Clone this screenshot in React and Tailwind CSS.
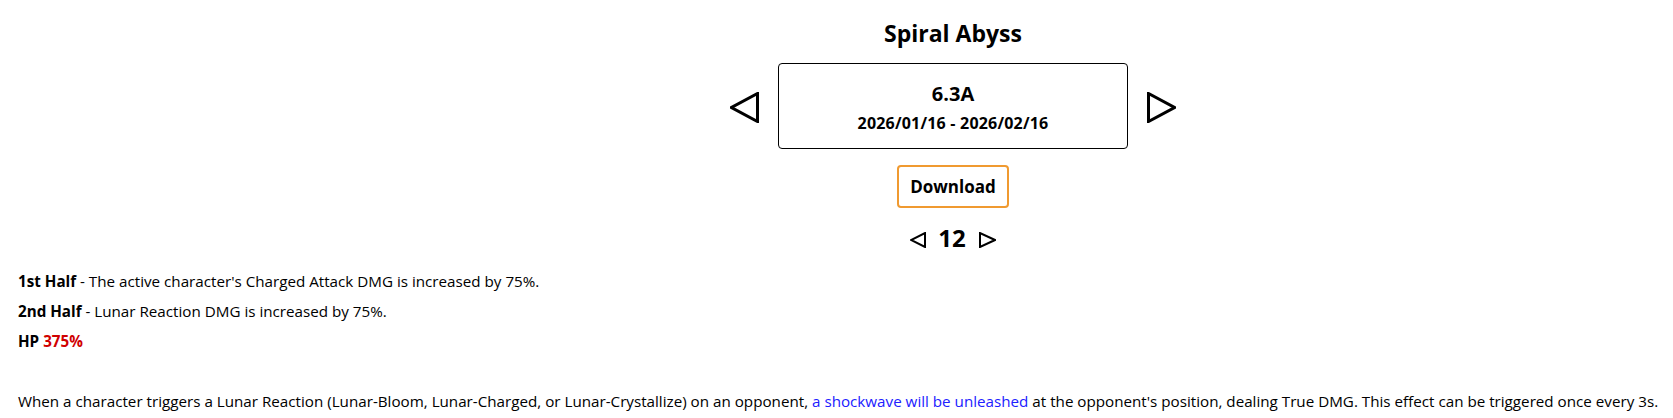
import React, { useState } from "react";

const font = { fontFamily: '"Open Sans", "Noto Sans", sans-serif' };

function Tri({ dir, w, h, stroke }) {
  // hollow triangle pointing left or right
  const pts =
    dir === "left"
      ? `${w - stroke / 2},${stroke / 2} ${w - stroke / 2},${h - stroke / 2} ${stroke / 2},${h / 2}`
      : `${stroke / 2},${stroke / 2} ${stroke / 2},${h - stroke / 2} ${w - stroke / 2},${h / 2}`;
  return (
    <svg width={w} height={h} viewBox={`0 0 ${w} ${h}`} className="shrink-0">
      <polygon points={pts} fill="none" stroke="black" strokeWidth={stroke} strokeLinejoin="miter" />
    </svg>
  );
}

export default function App() {
  const [floor, setFloor] = useState(12);

  return (
    <div className="w-[1673px] h-[418px] bg-white text-black overflow-hidden" style={font}>
      <div className="flex flex-col items-center pl-[233px] pt-[17px]">
        <h1 className="text-[23px] leading-[32px] font-bold">Spiral Abyss</h1>

        <div className="flex items-center gap-[19px] mt-[14px]">
          <button className="p-0 mt-[3px]">
            <Tri dir="left" w={29} h={31} stroke={3} />
          </button>
          <div className="w-[350px] h-[86px] border border-black rounded-[4px] flex flex-col items-center justify-center">
            <div className="text-[20px] leading-[28px] font-bold">6.3A</div>
            <div className="text-[16px] leading-[20px] font-bold tracking-[0.2px] mt-[5px]">2026/01/16 - 2026/02/16</div>
          </div>
          <button className="p-0 mt-[3px]">
            <Tri dir="right" w={29} h={31} stroke={3} />
          </button>
        </div>

        <button className="mt-[16px] w-[112px] h-[43px] border-2 border-[#f09a30] rounded-[4px] text-[17px] font-bold">
          Download
        </button>

        <div className="flex items-center mt-[14px] h-[32px]">
          <button className="p-0 mt-[3px]" onClick={() => setFloor(floor - 1)}>
            <Tri dir="left" w={16} h={16} stroke={2} />
          </button>
          <span className="text-[24px] leading-[32px] font-bold ml-[12px] mr-[13px]">{floor}</span>
          <button className="p-0 mt-[3px]" onClick={() => setFloor(floor + 1)}>
            <Tri dir="right" w={17} h={16} stroke={2} />
          </button>
        </div>
      </div>

      <div className="pl-[18px] mt-[12px] text-[15.2px] leading-[30px] whitespace-nowrap">
        <p>
          <b>1st Half</b> - The active character's Charged Attack DMG is increased by 75%.
        </p>
        <p>
          <b>2nd Half</b> - Lunar Reaction DMG is increased by 75%.
        </p>
        <p>
          <b>HP</b> <b className="text-[#d00000]">375%</b>
        </p>
        <p className="mt-[30px]">
          When a character triggers a Lunar Reaction (Lunar-Bloom, Lunar-Charged, or Lunar-Crystallize) on an opponent,{" "}
          <span className="text-[#2020ff]">a shockwave will be unleashed</span> at the opponent's position, dealing True
          DMG. This effect can be triggered once every 3s.
        </p>
      </div>
    </div>
  );
}
